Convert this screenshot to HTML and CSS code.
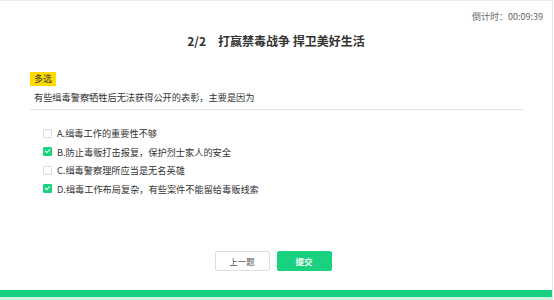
FILE: index.html
```html
<!DOCTYPE html>
<html lang="zh-CN">
<head>
    <meta charset="UTF-8">
    <meta name="viewport" content="width=device-width, initial-scale=1.0">
    <title>打赢禁毒战争 捍卫美好生活</title>
    <link rel="stylesheet" href="styles.css">
</head>
<body>
    <div class="page">
        <div class="timer">倒计时：00:09:39</div>
        <h1 class="title"><span class="num">2/2</span>打赢禁毒战争 捍卫美好生活</h1>
        <div class="question">
            <span class="tag">多选</span>
            <p class="stem">有些缉毒警察牺牲后无法获得公开的表彰，主要是因为</p>
        </div>
        <ul class="options">
            <li><span class="box"></span>A.缉毒工作的重要性不够</li>
            <li><span class="box checked"></span>B.防止毒贩打击报复，保护烈士家人的安全</li>
            <li><span class="box"></span>C.缉毒警察理所应当是无名英雄</li>
            <li><span class="box checked"></span>D.缉毒工作布局复杂，有些案件不能留给毒贩线索</li>
        </ul>
        <div class="actions">
            <button class="btn">上一题</button>
            <button class="btn primary">提交</button>
        </div>
        <div class="bar"></div>
    </div>
</body>
</html>
```

FILE: styles.css
```css
body {
    margin: 0;
    font-family: "Noto Sans CJK SC", "Noto Sans", sans-serif;
    color: #333;
    background: #fff;
}
.page {
    width: 552px;
    height: 299px;
    border-top: 1px solid #eee;
    border-right: 1px solid #e6e6e6;
    display: flex;
    flex-direction: column;
}
.timer {
    padding: 11px 9px 0 0;
    text-align: right;
    font-size: 9px;
    line-height: 10px;
    color: #666;
}
.title {
    margin: 12px 0 0;
    text-align: center;
    font-size: 12px;
    line-height: 14px;
    font-weight: bold;
    color: #333;
}
.num {
    margin-right: 12px;
}
.question {
    margin: 24px 0 0 30px;
    width: 493px;
    border-bottom: 1px solid #e2e2e2;
    padding-bottom: 6px;
    display: flex;
    flex-direction: column;
    align-items: flex-start;
}
.tag {
    background: #ffd900;
    font-size: 9px;
    line-height: 12px;
    padding: 1px 4px;
    color: #333;
}
.stem {
    margin: 5px 0 0;
    padding: 0 4px;
    font-size: 9.2px;
    line-height: 12px;
}
.options {
    list-style: none;
    margin: 17px 0 0;
    padding: 0 0 0 43px;
    display: flex;
    flex-direction: column;
    gap: 6.6px;
}
.options li {
    display: flex;
    align-items: center;
    gap: 5px;
    font-size: 9.2px;
    line-height: 12px;
}
.box {
    width: 7px;
    height: 7px;
    border: 1px solid #ddd;
    border-radius: 1px;
    background: #fff;
    position: relative;
}
.box.checked {
    background: #19d27f;
    border-color: #19d27f;
}
.box.checked::after {
    content: "";
    position: absolute;
    left: 2px;
    top: 0;
    width: 2px;
    height: 4px;
    border: solid #fff;
    border-width: 0 1.3px 1.3px 0;
    transform: rotate(45deg);
}
.actions {
    margin-top: auto;
    margin-bottom: 19px;
    display: flex;
    justify-content: center;
    gap: 7px;
    padding-right: 6px;
}
.btn {
    width: 55px;
    height: 20px;
    border: 1px solid #ddd;
    border-radius: 2px;
    background: #fff;
    font-family: inherit;
    font-size: 8.5px;
    color: #555;
    padding: 0;
}
.btn.primary {
    background: #19d27f;
    border-color: #19d27f;
    color: #fff;
    font-weight: bold;
}
.bar {
    height: 7px;
    background: #16d080;
    border-bottom: 3px solid #cdf5e3;
}
```
